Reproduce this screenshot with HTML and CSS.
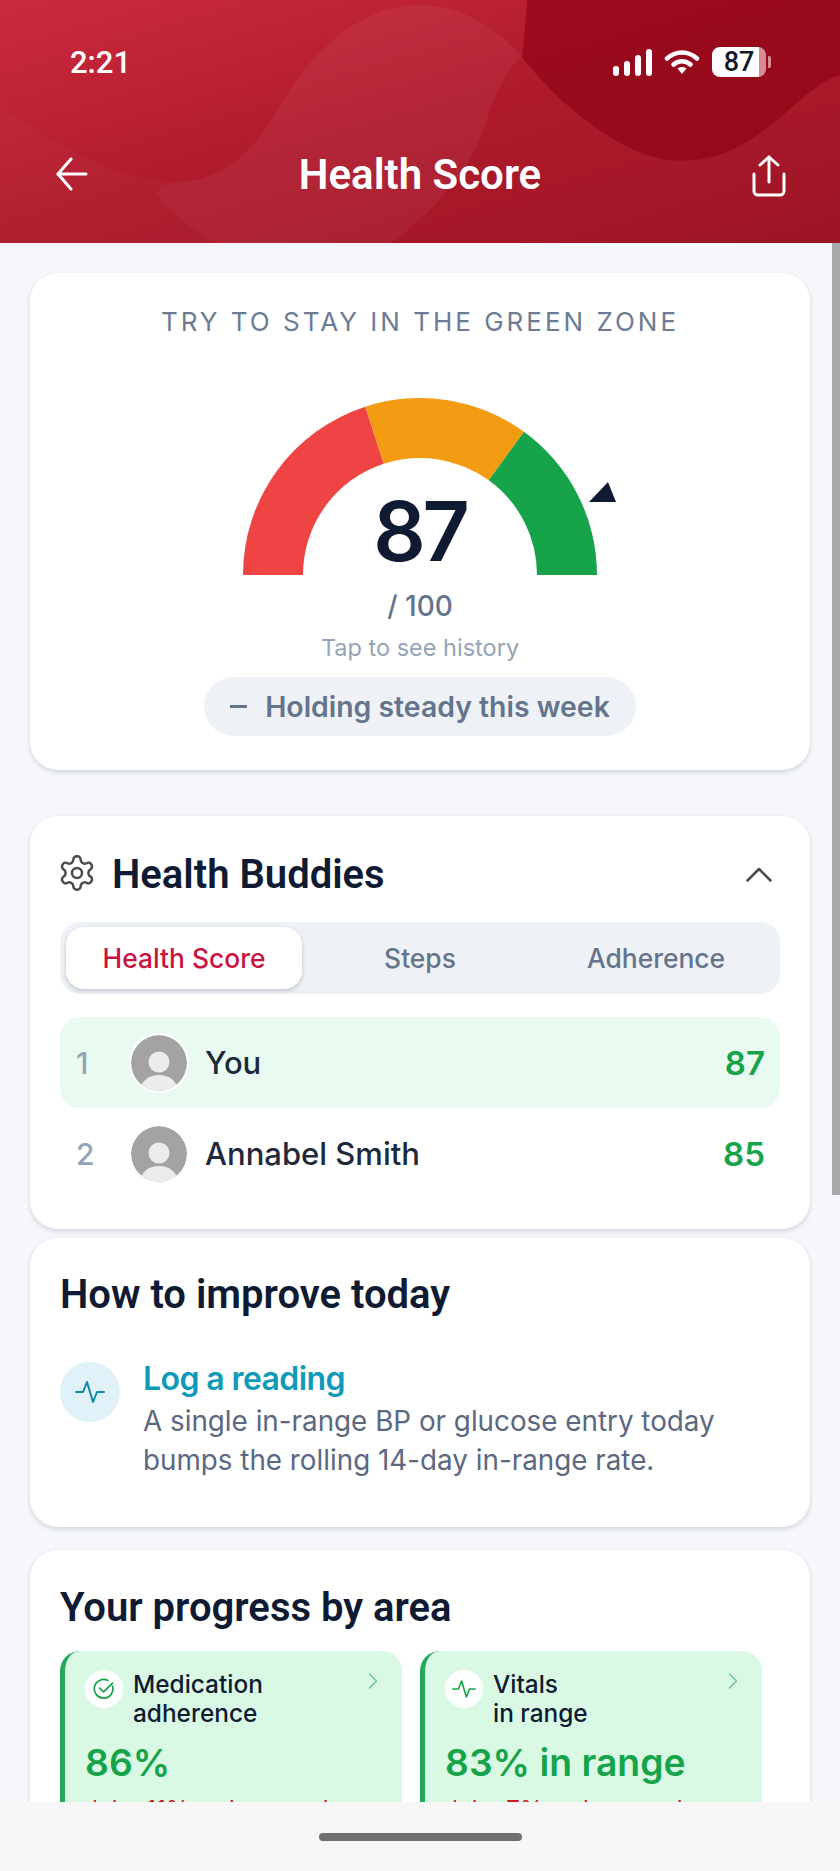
FILE: index.html
```html
<!DOCTYPE html>
<html lang="en">
<head>
  <meta charset="UTF-8" />
  <meta name="viewport" content="width=device-width, initial-scale=1.0"/>
  <title>Health Score</title>
  <link rel="stylesheet" href="styles.css">
</head>
<body>
  <div class="screen">

    <header class="top">
      <svg class="top-bg" viewBox="0 0 840 242" preserveAspectRatio="none">
        <defs>
          <linearGradient id="topGrad" x1="0" y1="0" x2="1" y2="1">
            <stop offset="0" stop-color="#cc2a3e"/>
            <stop offset="0.5" stop-color="#ae1a2c"/>
            <stop offset="1" stop-color="#9c1525"/>
          </linearGradient>
        </defs>
        <rect width="840" height="242" fill="url(#topGrad)"/>
        <path d="M0 108 C50 135 105 181 180 181 C170 182 160 186 155 192 C172 212 192 230 214 242 L0 242 Z" fill="#fff" opacity="0.025"/>
        <path d="M418 5 C365 5 315 45 280 105 C255 150 225 178 180 181 C170 182 160 186 155 192 C172 212 192 230 214 242 L391 242 C440 205 475 165 490 110 C505 70 520 55 522 57 C490 20 455 5 418 5 Z" fill="#fff" opacity="0.05"/>
        <path d="M527 0 C526 20 524 40 522 57 C545 85 565 105 589 122 C620 145 650 160 680 160 C725 160 750 140 777 120 C800 100 820 80 840 75 L840 0 Z" fill="#8f0416" opacity="0.72"/>
      </svg>

      <div class="status-bar">
        <span class="time">2:21</span>
        <div class="status-icons">
          <svg class="signal" viewBox="0 0 39 27" fill="#fff">
            <rect x="0" y="17" width="6" height="10" rx="3"/>
            <rect x="11" y="12" width="6" height="15" rx="3"/>
            <rect x="22" y="6" width="6" height="21" rx="3"/>
            <rect x="33" y="0" width="6" height="27" rx="3"/>
          </svg>
          <svg class="wifi" viewBox="0 0 36 26" fill="none" stroke="#fff" stroke-width="4.5" stroke-linecap="round">
            <path d="M3 9.5C12 1.5 24 1.5 33 9.5"/>
            <path d="M9.5 15.5C14.500 11 21.500 11 26.500 15.500"/>
            <path d="M18 25l-4.500-5.500c2.500-2 6.500-2 9 0z" fill="#fff" stroke="none"/>
          </svg>
          <div class="battery">
            <span class="battery-num">87</span>
            <span class="battery-tip"></span>
          </div>
        </div>
      </div>

      <div class="nav-bar">
        <svg class="nav-icon" viewBox="0 0 32 34" fill="none" stroke="#fff" stroke-width="3" stroke-linecap="round" stroke-linejoin="round">
          <path d="M30 17H2"/>
          <path d="M15 2L2 17l13 15"/>
        </svg>
        <h1 class="page-title">Health Score</h1>
        <svg class="nav-icon share" viewBox="0 0 34 42" fill="none" stroke="#fff" stroke-width="3" stroke-linecap="round" stroke-linejoin="round">
          <path d="M17 27V2"/>
          <path d="M8 10l9-8 9 8"/>
          <path d="M2 19v17a4 4 0 0 0 4 4h22a4 4 0 0 0 4-4V19"/>
        </svg>
      </div>
    </header>

    <main class="content">
      <div class="scrollbar"></div>

      <section class="card score-card">
        <p class="zone-label">TRY TO STAY IN THE GREEN ZONE</p>
        <div class="gauge">
          <svg class="gauge-svg" viewBox="0 0 420 190">
            <path d="M33 177A177 177 0 0 1 155.300 8.700L173.800 65.700A117 117 0 0 0 93 177Z" fill="#ef4444"/>
            <path d="M155.300 8.700A177 177 0 0 1 314 33.800L278.800 82.300A117 117 0 0 0 173.800 65.700Z" fill="#f39c12"/>
            <path d="M314 33.800A177 177 0 0 1 387 177H327A117 117 0 0 0 278.800 82.300Z" fill="#16a34a"/>
            <path d="M379 104L398 84L406 104Z" fill="#0f1b33"/>
          </svg>
          <div class="score-num">87</div>
        </div>
        <div class="score-max">/ 100</div>
        <div class="score-hint">Tap to see history</div>
        <div class="trend-pill"><span class="trend-dash"></span>Holding steady this week</div>
      </section>

      <section class="card buddies-card">
        <div class="buddies-head">
          <svg class="gear" viewBox="0 0 24 24" fill="none" stroke="#4b4b4b" stroke-width="1.500" stroke-linecap="round" stroke-linejoin="round">
            <path d="M12.220 2h-.440a2 2 0 0 0-2 2v.180a2 2 0 0 1-1 1.730l-.430.250a2 2 0 0 1-2 0l-.150-.080a2 2 0 0 0-2.730.730l-.220.380a2 2 0 0 0 .730 2.730l.150.100a2 2 0 0 1 1 1.720v.510a2 2 0 0 1-1 1.740l-.150.090a2 2 0 0 0-.730 2.730l.220.380a2 2 0 0 0 2.730.730l.150-.080a2 2 0 0 1 2 0l.430.250a2 2 0 0 1 1 1.730V20a2 2 0 0 0 2 2h.440a2 2 0 0 0 2-2v-.180a2 2 0 0 1 1-1.730l.430-.250a2 2 0 0 1 2 0l.150.080a2 2 0 0 0 2.730-.730l.220-.390a2 2 0 0 0-.730-2.730l-.150-.080a2 2 0 0 1-1-1.740v-.500a2 2 0 0 1 1-1.740l.150-.090a2 2 0 0 0 .730-2.730l-.220-.380a2 2 0 0 0-2.730-.730l-.150.080a2 2 0 0 1-2 0l-.430-.250a2 2 0 0 1-1-1.730V4a2 2 0 0 0-2-2z"/>
            <circle cx="12" cy="12" r="3"/>
          </svg>
          <h2 class="card-title">Health Buddies</h2>
          <svg class="chevron-up" viewBox="0 0 26 15" fill="none" stroke="#4b4b4b" stroke-width="2.500" stroke-linecap="round" stroke-linejoin="round">
            <path d="M1.500 13.500L13 2l11.500 11.500"/>
          </svg>
        </div>

        <div class="tabs">
          <div class="tab active">Health Score</div>
          <div class="tab">Steps</div>
          <div class="tab">Adherence</div>
        </div>

        <div class="buddy you">
          <span class="rank">1</span>
          <svg class="avatar ring" viewBox="0 0 56 56">
            <clipPath id="avatarClip1"><circle cx="28" cy="28" r="28"/></clipPath>
            <g clip-path="url(#avatarClip1)">
              <rect width="56" height="56" fill="#a3a3a3"/>
              <circle cx="28" cy="27" r="10.500" fill="#ececec"/>
              <ellipse cx="28" cy="54" rx="18" ry="14" fill="#ececec"/>
            </g>
          </svg>
          <span class="buddy-name">You</span>
          <span class="buddy-score">87</span>
        </div>
        <div class="buddy">
          <span class="rank">2</span>
          <svg class="avatar" viewBox="0 0 56 56">
            <clipPath id="avatarClip2"><circle cx="28" cy="28" r="28"/></clipPath>
            <g clip-path="url(#avatarClip2)">
              <rect width="56" height="56" fill="#a3a3a3"/>
              <circle cx="28" cy="27" r="10.500" fill="#ececec"/>
              <ellipse cx="28" cy="54" rx="18" ry="14" fill="#ececec"/>
            </g>
          </svg>
          <span class="buddy-name">Annabel Smith</span>
          <span class="buddy-score">85</span>
        </div>
      </section>

      <section class="card improve-card">
        <h2 class="card-title">How to improve today</h2>
        <div class="tip">
          <div class="tip-icon">
            <svg viewBox="0 0 30 26" fill="none" stroke="#0e8aa6" stroke-width="2" stroke-linecap="round" stroke-linejoin="round">
              <path d="M1 13h7l4-10 6 20 4-10h7"/>
            </svg>
          </div>
          <div class="tip-body">
            <div class="tip-title">Log a reading</div>
            <p class="tip-text">A single in-range BP or glucose entry today bumps the rolling 14-day in-range rate.</p>
          </div>
        </div>
      </section>

      <section class="card progress-card">
        <h2 class="card-title">Your progress by area</h2>
        <div class="areas">
          <div class="area">
            <div class="area-head">
              <div class="area-icon">
                <svg viewBox="0 0 26 26" fill="none" stroke="#16a34a" stroke-width="2" stroke-linecap="round" stroke-linejoin="round">
                  <path d="M23 9.500A11 11 0 1 1 17.500 3"/>
                  <path d="M8 12l4.500 4.500L23 6"/>
                </svg>
              </div>
              <div class="area-label">Medication<br>adherence</div>
              <svg class="area-chevron" viewBox="0 0 10 16" fill="none" stroke="#6cc596" stroke-width="1.600" stroke-linecap="round" stroke-linejoin="round">
                <path d="M1.500 1l7 7-7 7"/>
              </svg>
            </div>
            <div class="area-value">86%</div>
            <div class="area-note">↓ by 11% vs last week</div>
          </div>
          <div class="area">
            <div class="area-head">
              <div class="area-icon">
                <svg viewBox="0 0 30 26" fill="none" stroke="#16a34a" stroke-width="2" stroke-linecap="round" stroke-linejoin="round">
                  <path d="M1 13h7l4-10 6 20 4-10h7"/>
                </svg>
              </div>
              <div class="area-label">Vitals<br>in range</div>
              <svg class="area-chevron" viewBox="0 0 10 16" fill="none" stroke="#6cc596" stroke-width="1.600" stroke-linecap="round" stroke-linejoin="round">
                <path d="M1.500 1l7 7-7 7"/>
              </svg>
            </div>
            <div class="area-value">83% in range</div>
            <div class="area-note">↓ by 7% vs last week</div>
          </div>
        </div>
      </section>
    </main>

    <footer class="home-bar">
      <span class="home-indicator"></span>
    </footer>

  </div>
</body>
</html>
```

FILE: styles.css
```css
:root {
  --ink: #0f1b33;
  --muted: #64748b;
  --green: #16a34a;
  --bg: #f5f7fb;
  --radius: 28px;
}

* {
  box-sizing: border-box;
}

body {
  margin: 0;
  font-family: "Inter", sans-serif;
  background: var(--bg);
  color: var(--ink);
}

.screen {
  width: 840px;
  height: 1871px;
  display: flex;
  flex-direction: column;
  overflow: hidden;
}

/* header */

.top {
  position: relative;
  height: 243px;
  flex-shrink: 0;
  padding: 43px 54px 0 56px;
}

.top-bg {
  position: absolute;
  left: 0;
  top: 0;
  width: 100%;
  height: 100%;
}

.status-bar,
.nav-bar {
  position: relative;
  display: flex;
  justify-content: space-between;
  align-items: center;
}

.status-bar {
  height: 38px;
  padding-left: 14px;
  margin-right: 20px;
  color: #fff;
}

.time {
  font-family: "Roboto", sans-serif;
  font-size: 31px;
  font-weight: 500;
}

.status-icons {
  display: flex;
  align-items: center;
  gap: 12px;
}

.signal {
  width: 39px;
  height: 27px;
}

.wifi {
  width: 36px;
  height: 26px;
}

.battery {
  position: relative;
  width: 54px;
  height: 30px;
  border-radius: 8px;
  background: linear-gradient(90deg, #fff 87%, #d98b95 87%);
  text-align: center;
  line-height: 30px;
}

.battery-num {
  font-family: "Roboto", sans-serif;
  font-size: 27px;
  font-weight: 500;
  color: #111827;
}

.battery-tip {
  position: absolute;
  right: -5px;
  top: 9px;
  width: 3px;
  height: 12px;
  border-radius: 0 2px 2px 0;
  background: #d98b95;
}

.nav-bar {
  margin-top: 71px;
  height: 44px;
}

.nav-icon {
  width: 32px;
  height: 34px;
}

.nav-icon.share {
  width: 34px;
  height: 42px;
  margin-top: 4px;
}

.page-title {
  margin: 0;
  font-family: "Roboto", sans-serif;
  font-size: 42px;
  font-weight: 600;
  color: #fff;
}

/* content */

.content {
  position: relative;
  flex: 1;
  min-height: 0;
  overflow: hidden;
  padding: 30px 30px 0;
}

.scrollbar {
  position: absolute;
  right: 0;
  top: 0;
  width: 8px;
  height: 952px;
  background: #a9a9a9;
}

.card {
  background: #fff;
  border-radius: var(--radius);
  box-shadow: 0 2px 5px rgba(15, 23, 42, 0.16);
  padding: 0 30px;
}

.card-title {
  margin: 0;
  font-family: "Roboto", sans-serif;
  font-size: 40px;
  font-weight: 600;
  line-height: 44px;
  color: var(--ink);
}

/* score */

.score-card {
  height: 497px;
  display: flex;
  flex-direction: column;
  align-items: center;
}

.zone-label {
  margin: 33px 0 0;
  font-size: 26px;
  line-height: 32px;
  letter-spacing: 3px;
  color: #6b7c93;
}

.gauge {
  position: relative;
  width: 420px;
  height: 190px;
  margin-top: 60px;
}

.gauge-svg {
  display: block;
  width: 420px;
  height: 190px;
}

.score-num {
  position: absolute;
  left: 0;
  right: 0;
  top: 84px;
  text-align: center;
  font-size: 82px;
  font-weight: 600;
  letter-spacing: -3px;
  line-height: 100px;
  color: var(--ink);
}

.score-max {
  margin-top: 0;
  font-size: 28px;
  font-weight: 500;
  line-height: 36px;
  color: var(--muted);
}

.score-hint {
  margin-top: 9px;
  font-size: 23.500px;
  line-height: 30px;
  color: #94a3b8;
}

.trend-pill {
  display: flex;
  align-items: center;
  height: 59px;
  margin-top: 14px;
  padding: 0 26px;
  border-radius: 30px;
  background: #eef2f7;
  font-size: 28.400px;
  font-weight: 600;
  color: var(--muted);
  white-space: nowrap;
}

.trend-dash {
  width: 17px;
  height: 3px;
  margin-right: 18px;
  background: var(--muted);
}

/* buddies */

.buddies-card {
  height: 413px;
  margin-top: 46px;
  padding-top: 37px;
}

.buddies-head {
  display: flex;
  align-items: center;
  height: 44px;
}

.gear {
  width: 40px;
  height: 40px;
  margin: -4px 15px 0 -3px;
}

.buddies-head .card-title {
  flex: 1;
}

.chevron-up {
  width: 26px;
  height: 15px;
  margin: -2px 8px 0 0;
}

.tabs {
  display: grid;
  grid-template-columns: 236px 1fr 1fr;
  height: 72px;
  margin-top: 25px;
  padding: 5px 6px;
  border-radius: 20px;
  background: #eef1f6;
}

.tab {
  display: flex;
  align-items: center;
  justify-content: center;
  font-size: 26.400px;
  font-weight: 500;
  color: var(--muted);
}

.tab.active {
  border-radius: 18px;
  background: #fff;
  box-shadow: 0 2px 4px rgba(15, 23, 42, 0.2);
  color: #c8143f;
}

.buddy {
  display: flex;
  align-items: center;
  height: 91px;
  padding: 0 15px 0 16px;
  border-radius: 20px;
}

.buddy.you {
  margin-top: 23px;
  background: #e9fbf1;
}

.rank {
  width: 55px;
  font-size: 30px;
  font-weight: 500;
  color: #94a3b8;
}

.avatar {
  width: 56px;
  height: 56px;
  border-radius: 50%;
  margin-right: 18px;
}

.avatar.ring {
  box-shadow: 0 0 0 2px #fff;
}

.buddy-name {
  flex: 1;
  font-size: 31px;
  font-weight: 500;
  color: #1e293b;
}

.buddy-score {
  font-size: 33px;
  font-weight: 600;
  color: var(--green);
}

/* improve */

.improve-card {
  height: 289px;
  margin-top: 9px;
  padding-top: 35px;
}

.tip {
  display: flex;
  gap: 23px;
  margin-top: 42px;
}

.tip-icon {
  flex-shrink: 0;
  display: flex;
  align-items: center;
  justify-content: center;
  width: 60px;
  height: 60px;
  margin-top: 3px;
  border-radius: 50%;
  background: #e0f2f7;
}

.tip-icon svg {
  width: 30px;
  height: 26px;
}

.tip-title {
  font-size: 32px;
  font-weight: 600;
  letter-spacing: -0.600px;
  line-height: 40px;
  color: #0e9ab8;
}

.tip-text {
  margin: 3px 0 0;
  font-size: 27.800px;
  line-height: 39px;
  color: #5b6880;
}

/* progress */

.progress-card {
  height: 320px;
  margin-top: 23px;
  padding-top: 36px;
}

.areas {
  display: flex;
  gap: 18px;
  margin-top: 21px;
}

.area {
  width: 342px;
  height: 240px;
  padding: 19px 24px 0 20px;
  border-left: 5px solid #22a95a;
  border-radius: 20px;
  background: #daf9e4;
  flex-shrink: 0;
}

.area-head {
  display: flex;
  align-items: flex-start;
}

.area-icon {
  flex-shrink: 0;
  display: flex;
  align-items: center;
  justify-content: center;
  width: 38px;
  height: 38px;
  margin-right: 10px;
  border-radius: 50%;
  background: #fff;
}

.area-icon svg {
  width: 24px;
  height: 22px;
}

.area-label {
  flex: 1;
  font-size: 24.400px;
  font-weight: 500;
  line-height: 29px;
  color: var(--ink);
}

.area-chevron {
  width: 10px;
  height: 16px;
  margin-top: 3px;
}

.area-value {
  margin-top: 12px;
  font-size: 37.300px;
  font-weight: 600;
  line-height: 46px;
  color: var(--green);
  white-space: nowrap;
}

.area-note {
  margin-top: 9px;
  font-size: 24px;
  color: #c81e1e;
  white-space: nowrap;
}

/* home indicator */

.home-bar {
  position: relative;
  height: 69px;
  flex-shrink: 0;
  display: flex;
  justify-content: center;
  padding-top: 31px;
  background: #f7f7f7;
}

.home-indicator {
  width: 203px;
  height: 8px;
  border-radius: 4px;
  background: #707070;
}
```
